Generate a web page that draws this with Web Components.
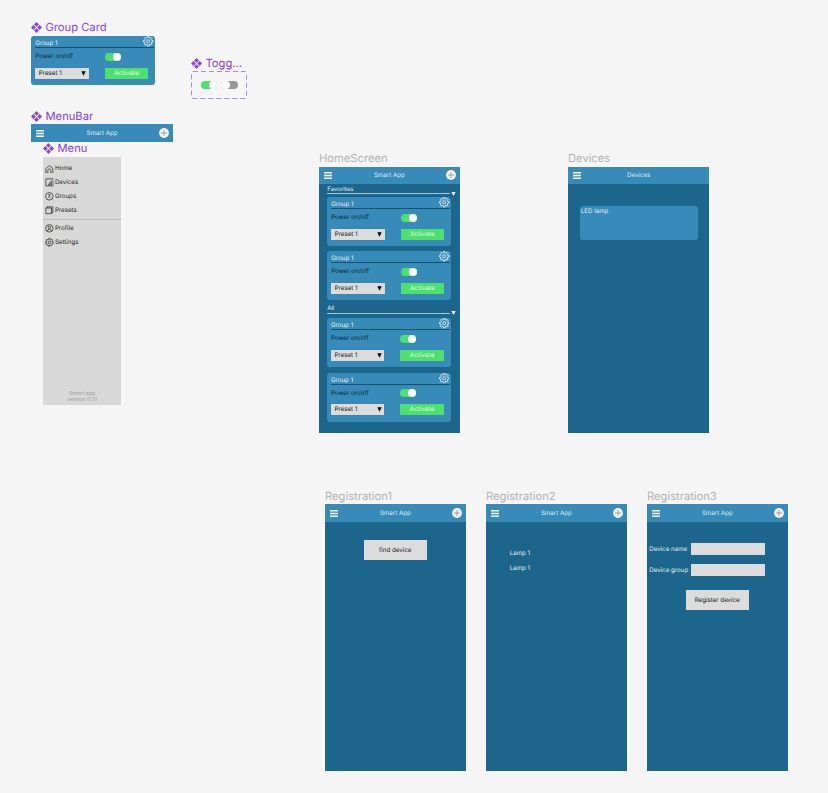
<!DOCTYPE html>
<html lang="en">
<head>
<meta charset="utf-8">
<title>Smart App</title>
<style>
html,body{margin:0;height:100%}
body{background:#f5f5f5;font-family:Inter,"Liberation Sans",sans-serif;overflow:hidden;text-rendering:geometricPrecision}
</style>
</head>
<body>
<design-canvas></design-canvas>
<script>
const define = (name, render) => customElements.define(name, class extends HTMLElement {
  connectedCallback() {
    if (this.shadowRoot) return;
    this.attachShadow({mode: 'open'}).innerHTML = render(this);
  }
});
const base = '*{box-sizing:border-box}svg{display:block;flex:none}';

// Eight-toothed gear outline: each tooth has two outer corners and two inner ones.
const gearPath = 'M' + Array.from({length: 8}, (_, k) => [[-13, 11], [-9, 8.2], [9, 8.2], [13, 11]]
  .map(([d, r]) => {
    const a = (k * 45 + 22.5 + d) * Math.PI / 180;
    return (12 + r * Math.cos(a)).toFixed(2) + ' ' + (12 + r * Math.sin(a)).toFixed(2);
  }).join('L')).join('L') + 'z';
define('gear-icon', () => `<style>:host{display:block;width:10.5px;height:10.5px}svg{display:block;width:100%;height:100%}</style>
<svg viewBox="0 0 24 24" fill="none" stroke="currentColor" stroke-width="2" stroke-linejoin="round"><circle cx="12" cy="12" r="3.4"/><path d="${gearPath}"/></svg>`);

define('toggle-switch', el => {
  const off = el.hasAttribute('off');
  return `<style>${base}:host{display:flex;align-items:center;justify-content:${off ? 'flex-start' : 'flex-end'};width:16px;height:8px;border-radius:4px;background:${off ? '#989898' : '#4ee06d'}}
i{width:8px;height:8px;border-radius:50%;background:#fff}</style><i></i>`;
});

define('preset-select', () => `<style>${base}:host{display:flex;align-items:center;justify-content:space-between;width:53.5px;height:11px;padding:0 2.5px 0 3.5px;background:#dcdcdc;color:#111;font-size:6.2px;line-height:8px;box-shadow:0 0 1px #0003}
span{padding-top:1px}svg{width:5px;height:5px}</style><span><slot></slot></span><svg viewBox="0 0 5 5"><path d="M.3.2h4.4L2.5 4.8z"/></svg>`);

define('group-card', () => `<style>${base}:host{display:flex;flex-direction:column;width:124px;height:49.3px;border-radius:3px;background:#388ab8;padding:1px 1px 0 4px;font-size:6.2px;line-height:8px;color:#09283c}
header{display:flex;justify-content:space-between;height:11px;border-bottom:1px solid #16516f;color:#e9f4fa}
header span{padding-top:3.2px}header gear-icon{margin-right:.5px;margin-top:-.8px}
.row{display:flex;align-items:center;height:8px;margin-top:4.8px}.row span{width:69.5px;padding-top:1px}
.acts{display:flex;gap:16px;margin-top:7px}
b{width:43.5px;height:11px;background:#4ee06d;color:#e2ffe8;font-weight:400;text-align:center;line-height:12.4px;letter-spacing:.1px}</style>
<header><span>Group 1</span><gear-icon></gear-icon></header><div class="row"><span>Power on/off</span><toggle-switch></toggle-switch></div><div class="acts"><preset-select>Preset 1</preset-select><b>Activate</b></div>`);

define('menu-bar', el => `<style>${base}:host{display:grid;grid-template-columns:12px 1fr 12px;align-items:center;height:17.7px;padding:0 3px 0 5px;background:#388ab8;color:#dfeef6;font-size:6.2px;line-height:9px}
span{text-align:center;margin-left:-2px;padding-top:.6px}.m{width:8px;height:7px}.p{width:10px;height:10px;margin-left:1px}</style>
<svg class="m" viewBox="0 0 8 7" fill="#f2f8fb"><path d="M0 0h8v1.6H0zM0 2.7h8v1.6H0zM0 5.4h8V7H0z"/></svg><span><slot></slot></span>
${el.hasAttribute('no-add') ? '' : `<svg class="p" viewBox="0 0 10 10"><circle cx="5" cy="5" r="4.9" fill="#f6f6f6"/><path d="M5 2v6M2 5h6" stroke="#99857d" stroke-width=".8"/></svg>`}`);

define('section-title', () => `<style>${base}:host{display:block;font-size:6.1px;line-height:8px;color:#e4eff5}
span{display:block;height:8px;padding-top:.8px}div{display:flex;align-items:center;gap:1px;height:2px}i{flex:none;width:123px;height:1px;background:#a9c7d7}svg{width:5px;height:4px}</style>
<span><slot></slot></span><div><i></i><svg viewBox="0 0 5 4" fill="#e8f3f8"><path d="M.3 0h4.4L2.5 4z"/></svg></div>`);

define('canvas-label', el => `<style>${base}:host{display:flex;align-items:center;gap:3.5px;height:14px;font-size:11.2px;line-height:14px;color:#b3b3b3;white-space:nowrap}
:host([component]){color:#8a42e0}svg{width:11px;height:11px}</style>
${el.hasAttribute('component') ? '<svg viewBox="0 0 12 12" fill="currentColor"><path d="M6 0l2.6 2.6L6 5.2 3.4 2.6zM6 6.8l2.6 2.6L6 12 3.4 9.4zM2.6 3.4L5.2 6 2.6 8.6 0 6zM9.4 3.4L12 6 9.4 8.6 6.8 6z"/></svg>' : ''}<span><slot></slot></span>`);

define('phone-screen', () => `<style>${base}:host{display:flex;flex-direction:column;width:141.3px;height:266.5px;background:#1c668d;color:#e4eff5;font-size:6.2px;line-height:8px}</style><slot></slot>`);

define('flat-button', () => `<style>:host{box-sizing:border-box;display:flex;align-items:center;justify-content:center;width:63px;height:19.5px;padding-top:1.4px;background:#dcdcdc;color:#151515;font-size:6.2px;line-height:8px}</style><slot></slot>`);

define('form-row', () => `<style>${base}:host{display:flex;align-items:center;height:12px;font-size:6.2px}span{width:41.8px;padding-top:1.2px;white-space:nowrap}i{width:74px;height:12px;background:#dcdcdc}</style><span><slot></slot></span><i></i>`);

const icons = {
  home: '<path d="M1 9.3V4l4-3.3L9 4v5.3H6.7V6.2a1.7 1.7 0 0 0-3.4 0v3.1z"/>',
  devices: '<path d="M9.3 1.6V1H1v8h2.3"/><path d="M4 9.3V7h1.4v2.3zM5.4 9.3V5.2h1.7v4.1M7.1 9.3V3.4h2.1v5.9z" stroke-width=".7"/>',
  groups: '<circle cx="5" cy="5" r="4.3"/><circle cx="5" cy="3.4" r=".7"/><path d="M5 4v1.2M3.4 6.7L5 5.2l1.6 1.5" stroke-width=".8"/>',
  presets: '<path d="M1 2.3h6.4v6.5H1zM2.2 2.3V1H9v6.6H7.4"/>',
  profile: '<circle cx="5" cy="5" r="4.3"/><circle cx="5" cy="3.9" r="1.4"/><path d="M2.2 8c.8-2.2 4.8-2.2 5.6 0"/>'
};
define('menu-item', el => `<style>${base}:host{display:flex;align-items:center;gap:1.2px;height:13.8px;font-size:6.2px;color:#242424;line-height:8px}span{padding-top:.6px}svg,gear-icon{width:8.7px;height:8.7px;flex:none}</style>
${el.getAttribute('icon') === 'settings' ? '<gear-icon></gear-icon>' : `<svg viewBox="0 0 10 10" fill="none" stroke="#303030" stroke-width=".9">${icons[el.getAttribute('icon')]}</svg>`}<span><slot></slot></span>`);

define('side-menu', () => `<style>${base}:host{display:flex;flex-direction:column;width:78px;height:248.5px;background:#d8d8d8;padding-top:5.5px}
nav{padding-left:2px}hr{width:100%;height:1px;border:0;background:#bcbcbc;margin:2px 0 1.5px}
footer{margin-top:auto;padding-bottom:1.7px;text-align:center;font-size:5.4px;line-height:6px;color:#a4a4a4}</style>
<nav><menu-item icon="home">Home</menu-item><menu-item icon="devices">Devices</menu-item><menu-item icon="groups">Groups</menu-item><menu-item icon="presets">Presets</menu-item></nav><hr>
<nav><menu-item icon="profile">Profile</menu-item><menu-item icon="settings">Settings</menu-item></nav><footer>Smart app<br>version 0.01</footer>`);

const item = (x, y, html) => `<div class="item" style="left:${x}px;top:${y}px">${html}</div>`;
define('design-canvas', () => `<style>${base}:host{display:block;position:relative;width:828px;height:793px}
.item{position:absolute}
.set{display:flex;gap:5px;align-items:center;justify-content:center;width:56px;height:28px}
.dash{position:relative}.dash>svg{position:absolute;inset:0}
.bar{width:141.5px}
.home{display:flex;flex-direction:column;padding:.8px 0 0 8.5px}
.upper{display:grid;gap:4.4px;margin-top:2.2px}
.lower{display:grid;gap:5.3px;margin:3.8px 0 0 -.3px}
.second{margin-top:4.1px}
.lamp{width:118.5px;height:34px;border-radius:3px;background:#388ab8;margin:21.5px 0 0 11.5px;padding:2.3px 1.3px}
.find{margin:18.5px 0 0 39px}
.list{padding:28.1px 0 0 24px;display:grid;gap:6.5px}
.form{padding:21.3px 0 0 2.5px;display:grid;gap:9px}
.reg{margin:14px 0 0 39px}
</style>
${item(31, 20, '<canvas-label component>Group Card</canvas-label>')}
${item(31.3, 35.9, '<group-card></group-card>')}
${item(191, 56, '<canvas-label component>Togg...</canvas-label>')}
${item(191, 71, '<div class="dash"><svg width="56" height="28" fill="none" stroke="#a98be0" stroke-dasharray="5 3"><rect x=".5" y=".5" width="55" height="27" rx="1.5"/></svg><div class="set"><toggle-switch></toggle-switch><toggle-switch off></toggle-switch></div></div>')}
${item(31, 109, '<canvas-label component>MenuBar</canvas-label>')}
${item(31.3, 124.3, '<menu-bar class="bar">Smart App</menu-bar>')}
${item(43, 141, '<canvas-label component>Menu</canvas-label>')}
${item(43, 156.5, '<side-menu></side-menu>')}
${item(319, 151, '<canvas-label>HomeScreen</canvas-label>')}
${item(318.7, 166.5, `<phone-screen><menu-bar>Smart App</menu-bar><div class="home"><section-title>Favorites</section-title><div class="upper"><group-card></group-card><group-card></group-card></div><div class="second"><section-title>All</section-title><div class="lower"><group-card></group-card><group-card></group-card></div></div></div></phone-screen>`)}
${item(568, 151, '<canvas-label>Devices</canvas-label>')}
${item(568, 166.5, '<phone-screen><menu-bar no-add>Devices</menu-bar><div class="lamp">LED lamp</div></phone-screen>')}
${item(325, 489.3, '<canvas-label>Registration1</canvas-label>')}
${item(324.7, 504.3, '<phone-screen><menu-bar>Smart App</menu-bar><flat-button class="find">find device</flat-button></phone-screen>')}
${item(486, 489.3, '<canvas-label>Registration2</canvas-label>')}
${item(485.7, 504.3, '<phone-screen><menu-bar>Smart App</menu-bar><div class="list"><span>Lamp 1</span><span>Lamp 1</span></div></phone-screen>')}
${item(647, 489.3, '<canvas-label>Registration3</canvas-label>')}
${item(646.7, 504.3, '<phone-screen><menu-bar>Smart App</menu-bar><div class="form"><form-row>Device name</form-row><form-row>Device group</form-row></div><flat-button class="reg">Register device</flat-button></phone-screen>')}`);
</script>
</body>
</html>
